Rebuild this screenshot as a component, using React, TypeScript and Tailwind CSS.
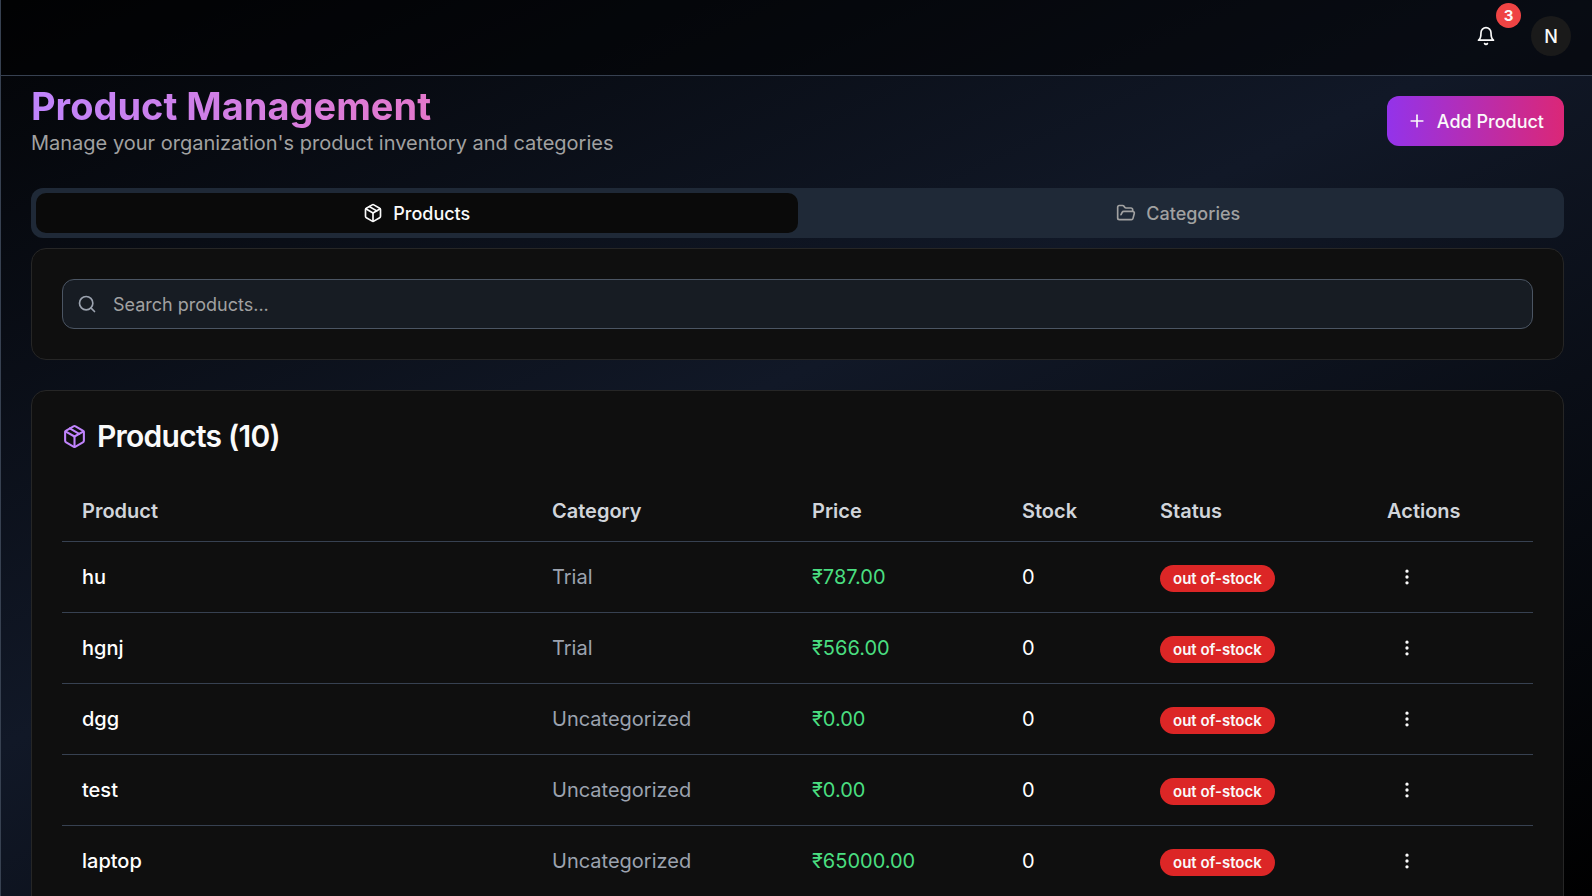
import { FolderOpen, MoreVertical, Package, Plus, Search } from "lucide-react";
import clsx from "clsx";

interface Product {
  name: string;
  category: string;
  price: number;
  stock: number;
}

const PRODUCT_COUNT = 10;

const products: Product[] = [
  { name: "hu", category: "Trial", price: 787, stock: 0 },
  { name: "hgnj", category: "Trial", price: 566, stock: 0 },
  { name: "dgg", category: "Uncategorized", price: 0, stock: 0 },
  { name: "test", category: "Uncategorized", price: 0, stock: 0 },
  { name: "laptop", category: "Uncategorized", price: 65000, stock: 0 },
];

const columns = [
  { label: "Product", width: "" },
  { label: "Category", width: "w-[260px]" },
  { label: "Price", width: "w-[210px]" },
  { label: "Stock", width: "w-[138px]" },
  { label: "Status", width: "w-[227px]" },
  { label: "Actions", width: "w-[166px]" },
];

const tabs = [
  { label: "Products", icon: Package, active: true },
  { label: "Categories", icon: FolderOpen, active: false },
];

function BellIcon({ className }: { className?: string }) {
  return (
    <svg
      viewBox="0 0 24 24"
      fill="none"
      stroke="currentColor"
      strokeWidth="2"
      strokeLinecap="round"
      strokeLinejoin="round"
      aria-hidden="true"
      className={className}
    >
      <path d="M6 8a6 6 0 0 1 12 0c0 7 3 9 3 9H3s3-2 3-9" />
      <path d="M10.3 21a1.94 1.94 0 0 0 3.4 0" />
    </svg>
  );
}

function Header() {
  return (
    <header className="flex shrink-0 items-center justify-end gap-[25px] border-b border-[#374151] bg-black/50 pt-4 pr-[21px] pb-[19px]">
      <button
        type="button"
        aria-label="Notifications"
        className="relative flex size-10 items-center justify-center text-neutral-50"
      >
        <BellIcon className="size-5" />
        <span className="absolute -top-[13px] -right-[15px] flex size-[25px] items-center justify-center rounded-full bg-[#ef4444] text-[15px] leading-5 font-bold">
          3
        </span>
      </button>
      <button
        type="button"
        aria-label="Account"
        className="flex size-10 items-center justify-center rounded-full bg-[#1a1a1a] text-[18px] font-medium text-neutral-50"
      >
        N
      </button>
    </header>
  );
}

function PageTitle() {
  return (
    <div className="flex items-center justify-between">
      <div>
        <h1 className="bg-linear-to-r/srgb from-[#c084fc] to-[#f472b6] bg-clip-text text-[38px] leading-11 font-bold text-transparent">
          Product Management
        </h1>
        <p className="text-xl leading-[30px] text-[#a1a1a1]">
          Manage your organization's product inventory and categories
        </p>
      </div>
      <button
        type="button"
        className="flex h-[50px] items-center gap-2.5 rounded-xl bg-linear-to-r/srgb from-[#9333ea] to-[#db2777] px-5 text-[18px] font-medium text-neutral-50"
      >
        <Plus className="size-5" />
        Add Product
      </button>
    </div>
  );
}

function Tabs() {
  return (
    <div role="tablist" className="grid h-[50px] grid-cols-2 rounded-xl bg-[#1f2937] p-[5px]">
      {tabs.map(({ label, icon: Icon, active }) => (
        <button
          key={label}
          type="button"
          role="tab"
          aria-selected={active}
          className={clsx(
            "flex items-center justify-center gap-2.5 rounded-[10px] text-[18px] font-medium",
            active ? "bg-[#0a0a0a] text-neutral-50" : "text-[#a1a1a1]",
          )}
        >
          <Icon className="size-5" />
          {label}
        </button>
      ))}
    </div>
  );
}

function SearchCard() {
  return (
    <div className="rounded-[15px] border border-[#262626] bg-[#0f0f0f] p-[30px]">
      <div className="relative">
        <Search className="pointer-events-none absolute top-[15px] left-[15px] size-5 text-[#9ca3af]" />
        <input
          type="text"
          aria-label="Search products"
          placeholder="Search products..."
          className="block h-[50px] w-full rounded-xl border border-[#4b5563] bg-[#1f2937]/50 pr-4 pl-[50px] text-[18px] text-white outline-none placeholder:text-[#a1a1a1]"
        />
      </div>
    </div>
  );
}

function ProductRow({ product }: { product: Product }) {
  return (
    <tr className="border-b border-[#374151]">
      <td className="px-5 py-[15px] font-medium text-white">{product.name}</td>
      <td className="px-5 py-[15px] text-[#9ca3af]">{product.category}</td>
      <td className="px-5 py-[15px] text-[#4ade80]">₹{product.price.toFixed(2)}</td>
      <td className="px-5 py-[15px] text-white">{product.stock}</td>
      <td className="px-5 py-[15px]">
        <span className="inline-flex h-[27px] items-center rounded-full bg-[#dc2626] px-[13px] text-[15px] leading-5 font-semibold text-neutral-50">
          out of-stock
        </span>
      </td>
      <td className="px-5 py-[15px]">
        <button
          type="button"
          aria-label={`Actions for ${product.name}`}
          className="flex size-10 items-center justify-center text-neutral-50"
        >
          <MoreVertical className="size-5" />
        </button>
      </td>
    </tr>
  );
}

function ProductsCard() {
  return (
    <div className="rounded-[15px] border border-[#262626] bg-[#0f0f0f] p-[30px]">
      <h2 className="flex items-center gap-2.5 pb-[30px] text-3xl leading-[30px] font-semibold tracking-tight text-neutral-50">
        <Package className="size-[25px] text-[#c084fc]" />
        Products ({PRODUCT_COUNT})
      </h2>
      <table className="w-full table-fixed border-collapse text-left text-xl leading-[30px]">
        <thead>
          <tr className="border-b border-[#374151]">
            {columns.map(column => (
              <th
                key={column.label}
                scope="col"
                className={clsx("px-5 py-[15px] font-semibold text-[#d1d5db]", column.width)}
              >
                {column.label}
              </th>
            ))}
          </tr>
        </thead>
        <tbody>
          {products.map(product => (
            <ProductRow key={product.name} product={product} />
          ))}
        </tbody>
      </table>
    </div>
  );
}

export default function App() {
  return (
    <div className="flex h-screen flex-col border-l border-[#374151] bg-black bg-[linear-gradient(to_bottom_right,#000,#111827,#000)] bg-[length:calc(100%_+_320px)_100%] bg-right bg-no-repeat font-['Inter',sans-serif]">
      <Header />
      <main className="flex-1 overflow-y-auto pt-2 pr-7 pb-[30px] pl-[30px] [scrollbar-width:none]">
        <PageTitle />
        <div className="flex flex-col gap-2.5 pt-[30px]">
          <Tabs />
          <div className="flex flex-col gap-[30px]">
            <SearchCard />
            <ProductsCard />
          </div>
        </div>
      </main>
    </div>
  );
}
